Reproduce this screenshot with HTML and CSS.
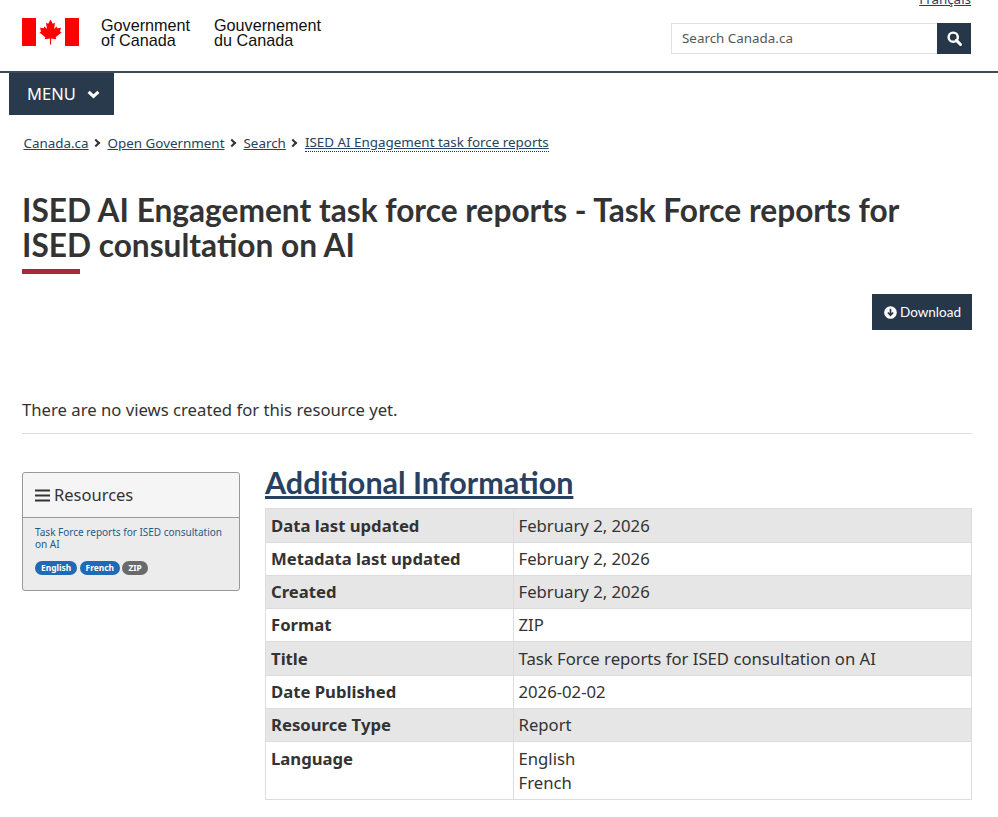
FILE: index.html
```html
<!DOCTYPE html>
<html lang="en">
<head>
<meta charset="utf-8">
<title>ISED AI Engagement task force reports</title>
<link rel="stylesheet" href="styles.css">
</head>
<body>
<header class="site-header">
  <div class="brand-row">
    <a class="brand" href="#">
      <svg class="flag" viewBox="0 0 58 28" width="58" height="28" aria-hidden="true">
        <rect x="0" y="0" width="14" height="28" fill="#f00"/>
        <rect x="43" y="0" width="14" height="28" fill="#f00"/>
        <polygon fill="#f00" points="28.500,1.500 30.800,5.800 33,4.700 32,11 34.500,8.400 35.300,10.300 39,9.700 38,13.500 39.500,14.500 33.700,19.300 34.300,21.300 29.100,20.500 29.100,26.500 27.900,26.500 27.900,20.500 22.700,21.300 23.300,19.300 17.500,14.500 19,13.500 18,9.700 21.700,10.300 22.500,8.400 25,11 24,4.700 26.200,5.800"/>
      </svg>
      <span class="sig sig-en">Government<br>of Canada</span>
      <span class="sig sig-fr">Gouvernement<br>du Canada</span>
    </a>
    <div class="tools">
      <a class="lang" href="#">Français</a>
      <form class="search">
        <div class="search-input">Search Canada.ca</div>
        <button class="search-btn" type="button" aria-label="Search">
          <svg viewBox="0 0 14 14" width="15" height="15"><circle cx="5.800" cy="5.800" r="4.300" fill="none" stroke="#fff" stroke-width="2.300"/><path d="M8.800 8.800L12.600 12.600" stroke="#fff" stroke-width="2.800" stroke-linecap="round"/></svg>
        </button>
      </form>
    </div>
  </div>
  <div class="rule"></div>
  <button class="menu" type="button"><span class="menu-label">MENU</span>
    <svg viewBox="0 0 12 8" width="13" height="9"><path d="M1.500 1.500L6 5.800l4.500-4.300" fill="none" stroke="#fff" stroke-width="2.800"/></svg>
  </button>
  <nav class="crumbs">
    <a href="#">Canada.ca</a><span class="chev"></span>
    <a href="#">Open Government</a><span class="chev"></span>
    <a href="#">Search</a><span class="chev"></span>
    <a href="#" class="current">ISED AI Engagement task force reports</a>
  </nav>
</header>
<main class="page">
  <h1 class="title">ISED AI Engagement task force reports - Task Force reports for ISED consultation on AI</h1>
  <div class="actions">
    <a class="download" href="#">
      <svg viewBox="0 0 14 14" width="13" height="13"><circle cx="7" cy="7" r="6.800" fill="#fff"/><path d="M7 3v6.500M4.200 7L7 10l2.800-3" fill="none" stroke="#26374a" stroke-width="1.800"/></svg>
      Download
    </a>
  </div>
  <p class="noviews">There are no views created for this resource yet.</p>
  <div class="columns">
    <aside class="panel">
      <div class="panel-head">
        <svg viewBox="0 0 15 13" width="15" height="13"><path d="M0 1.500h15M0 6.500h15M0 11.500h15" stroke="#333" stroke-width="2.200"/></svg>
        <span>Resources</span>
      </div>
      <div class="panel-body">
        <a class="res-link" href="#">Task Force reports for ISED consultation on AI</a>
        <div class="badges">
          <span class="badge blue">English</span><span class="badge blue">French</span><span class="badge grey">ZIP</span>
        </div>
      </div>
    </aside>
    <section class="info">
      <h2 class="info-title"><a href="#">Additional Information</a></h2>
      <table class="meta">
        <tbody>
          <tr><th>Data last updated</th><td>February 2, 2026</td></tr>
          <tr><th>Metadata last updated</th><td>February 2, 2026</td></tr>
          <tr><th>Created</th><td>February 2, 2026</td></tr>
          <tr><th>Format</th><td>ZIP</td></tr>
          <tr><th>Title</th><td>Task Force reports for ISED consultation on AI</td></tr>
          <tr><th>Date Published</th><td>2026-02-02</td></tr>
          <tr><th>Resource Type</th><td>Report</td></tr>
          <tr><th>Language</th><td>English<br>French</td></tr>
        </tbody>
      </table>
    </section>
  </div>
</main>
</body>
</html>
```
FILE: styles.css
```css
* { box-sizing: border-box; }
html, body { margin: 0; padding: 0; background: #fff; overflow: hidden; height: 817px; }
body { font-family: "Noto Sans", sans-serif; font-size: 16.700px; line-height: 24px; color: #333; }

.brand-row { display: flex; justify-content: space-between; height: 71px; padding: 0 27px 0 22px; overflow: hidden; }
.brand { display: flex; align-items: flex-start; padding-top: 18px; text-decoration: none; color: #000; }
.flag { flex: none; display: block; }
.sig { font-family: "Liberation Sans", sans-serif; font-size: 16.200px; line-height: 15px; color: #111; }
.sig-en { margin-left: 21px; width: 112px; }
.sig-fr { margin-left: 1px; }
.tools { width: 300px; display: flex; flex-direction: column; align-items: flex-end; }
.lang { font-size: 13.400px; line-height: 18px; margin-top: -10px; color: #284162; }
.search { display: flex; width: 300px; height: 31px; margin-top: 15px; }
.search-input { flex: 1; border: 1px solid #e0e0e0; border-right: 0; font-size: 13.400px; line-height: 28px; padding-left: 10px; color: #555; }
.search-btn { width: 34px; border: 0; padding: 0; background: #26374a; display: flex; align-items: center; justify-content: center; }
.rule { height: 2px; background: #3f4a59; }
.menu { display: flex; align-items: center; gap: 11px; margin-left: 9px; width: 105px; height: 42px; padding: 0 0 0 18px; border: 0; background: #2a3a4d; color: #fff; font-family: "Noto Sans", sans-serif; font-size: 16.500px; }
.menu-label { margin-top: -2px; }
.crumbs { display: flex; align-items: center; margin: 18px 0 0 23.500px; font-size: 13.400px; line-height: 20px; }
.crumbs a { color: #284162; }
.crumbs .current { border-bottom: 1px dotted #333; line-height: 17px; }
.chev { width: 6px; height: 6px; margin: 0 8.500px 0 4.500px; border-top: 2.500px solid #333; border-right: 2.500px solid #333; transform: rotate(45deg); }

.page { padding: 0 26px 0 22px; }
.title { font-family: Lato, sans-serif; font-weight: 700; font-size: 31.650px; line-height: 35px; color: #333; margin: 40px 0 0; }
.title::after { content: ""; display: block; width: 58px; height: 5px; margin-top: 6px; background: #a62a3e; }
.actions { display: flex; justify-content: flex-end; margin-top: 20px; }
.download { display: flex; align-items: center; gap: 3px; height: 36px; width: 100px; padding-left: 12px; background: #26374a; color: #fff; font-family: Lato, sans-serif; font-size: 13.500px; text-decoration: none; }
.noviews { margin: 68px 0 0; padding-bottom: 11px; border-bottom: 1px solid #ddd; }
.columns { display: flex; gap: 25px; margin-top: 38px; }
.panel { flex: none; width: 218px; height: 119px; border: 1px solid #999; border-radius: 3px; background: #ececec; }
.panel-head { display: flex; align-items: center; gap: 4px; height: 45px; padding-left: 12px; background: #f5f5f5; border-bottom: 1px solid #999; border-radius: 3px 3px 0 0; font-size: 16.500px; }
.panel-body { padding: 8px 12px 0; }
.res-link { display: block; font-size: 10px; line-height: 12px; color: #1f5a8a; text-decoration: none; }
.badges { display: flex; gap: 2.500px; margin-top: 11px; }
.badge { display: block; font-size: 8.400px; font-weight: 700; line-height: 14px; height: 14px; padding: 0 6px; border-radius: 7px; color: #fff; }
.blue { background: #1f6ab5; }
.grey { background: #6a6a6a; }
.info { flex: 1; min-width: 0; }
.info-title { font-family: Lato, sans-serif; font-weight: 700; font-size: 30.500px; line-height: 36px; margin: -8px 0 0; }
.info-title a { color: #284162; }
.meta { width: 100%; border-collapse: collapse; margin-top: 8.300px; table-layout: fixed; }
.meta th, .meta td { border: 1px solid #ddd; padding: 4.250px 5px 4.050px; text-align: left; vertical-align: top; font-size: 16.700px; line-height: 24px; }
.meta td { padding-left: 4.500px; }
.meta th { width: 248px; font-weight: 700; }
.meta tr:nth-child(odd) th, .meta tr:nth-child(odd) td { background: #e6e6e6; }
.meta tr:last-child td, .meta tr:last-child th { height: 58px; }
```
